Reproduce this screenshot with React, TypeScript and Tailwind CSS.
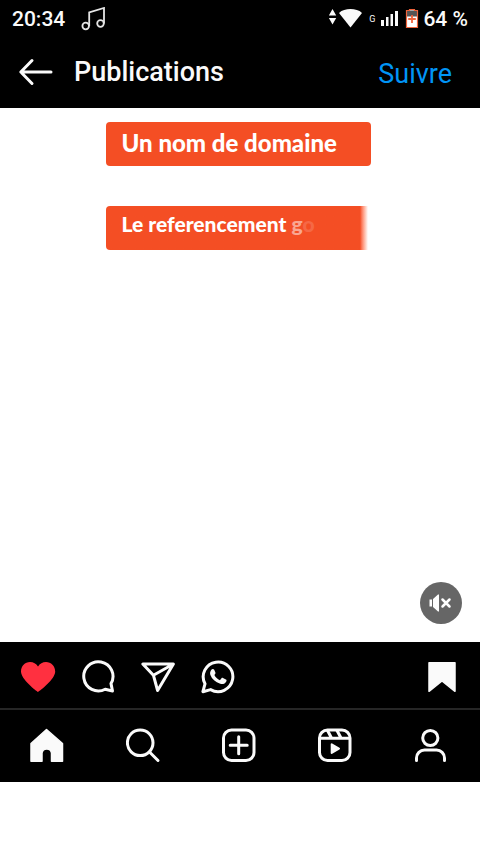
import React, { useState } from 'react';

interface IconButtonProps {
  label: string;
  onClick?: () => void;
  pressed?: boolean;
  children: React.ReactNode;
}

const IconButton: React.FC<IconButtonProps> = ({ label, onClick, pressed, children }) => (
  <button type="button" aria-label={label} aria-pressed={pressed} onClick={onClick} className="size-9 shrink-0">
    <svg
      viewBox="0 0 36 36"
      className="size-9"
      fill="none"
      stroke="currentColor"
      strokeWidth="3"
      strokeLinecap="round"
      strokeLinejoin="round"
    >
      {children}
    </svg>
  </button>
);

const StatusBar: React.FC = () => (
  <div className="flex h-[38px] items-center justify-between px-3 text-[21px] font-medium leading-9">
    <div className="flex items-center gap-4">
      <span>20:34</span>
      <svg viewBox="0 0 24 24" className="size-6" fill="none" stroke="#e5e5e5" strokeWidth="1.800">
        <circle cx="4.700" cy="19" r="3.300" />
        <circle cx="19.500" cy="16.500" r="3.300" />
        <path d="M8.200 19V5.500L23 1v15.500" />
      </svg>
    </div>
    <div className="flex items-center gap-1.5">
      <svg viewBox="0 0 34 20" className="h-5 w-[34px]" fill="currentColor">
        <path d="M3.500 0l3.700 6.500H-.2zM3.500 15.500L-.2 9h7.400z" />
        <path d="M21.500 18.500L10 4C13 1 17 0 21.500 0S30 1 33 4z" />
      </svg>
      <span className="text-[9px] font-normal leading-none">G</span>
      <svg viewBox="0 0 18 16" className="h-4 w-[18px]" fill="currentColor">
        <path d="M0 9h3v6H0zM5 6h2.500v9H5zM9.500 3H12v12H9.500zM14 0h3v15h-3z" />
      </svg>
      <div className="flex items-center gap-1">
        <svg viewBox="0 0 14 20" className="h-5 w-3.5">
          <path d="M1.500 1.500h3V.5h5v1h3v17h-11z" fill="#fff" />
          <path d="M1.500 1.500h11v6h-11z" fill="#555" />
          <path d="M1.500 1.500h3V.5h5v1h3v17h-11z" fill="none" stroke="#f0643c" strokeWidth="1.200" />
          <path d="M7 6v8M3.200 10h7.600" stroke="#f0643c" strokeWidth="1.800" />
        </svg>
        <span>64 %</span>
      </div>
    </div>
  </div>
);

const Header: React.FC = () => {
  const [following, setFollowing] = useState(false);

  return (
    <header className="flex h-[70px] items-center pb-0.5 pl-[18px] pr-7 text-[27px] leading-8">
      <IconButton label="Retour">
        <path d="M33 18H3M14 6.500L2.800 18 14 29.500" />
      </IconButton>
      <h1 className="ml-5 grow font-medium">Publications</h1>
      <button
        type="button"
        onClick={() => setFollowing(!following)}
        className="self-end py-4 text-[#0095f6]"
      >
        {following ? 'Suivi(e)' : 'Suivre'}
      </button>
    </header>
  );
};

const Media: React.FC = () => {
  const [muted, setMuted] = useState(true);

  return (
    <section className="relative aspect-[80/89] bg-white pl-[22%] pt-3.5 font-['Lato',sans-serif] font-black text-white">
      <p className="h-11 w-[71%] rounded bg-[#f44e24] pl-4 text-[24px] leading-[42px] whitespace-nowrap">
        Un nom de domaine
      </p>
      {/* second line is still being revealed */}
      <p className="mt-10 h-11 w-[70%] rounded-l bg-linear-to-r from-[#f44e24] from-97% to-white pl-4 text-[21px] leading-9 whitespace-nowrap">
        Le referencement <span className="opacity-50">g</span>
        <span className="opacity-15">o</span>
      </p>
      <button
        type="button"
        aria-label="Son"
        aria-pressed={muted}
        onClick={() => setMuted(!muted)}
        className="absolute bottom-[18px] right-[18px] size-[42px] rounded-full bg-[#666]"
      >
        <svg viewBox="0 0 42 42" className="size-[42px]" fill="#fff">
          <path d="M9.500 17.500h2.500v7H9.500zM13 17l5-4.500h1v17h-1l-5-4.500z" />
          {muted && (
            <path d="M22.500 17.500l7 7M29.500 17.500l-7 7" stroke="#fff" strokeWidth="2.500" strokeLinecap="round" />
          )}
        </svg>
      </button>
    </section>
  );
};

const Actions: React.FC = () => {
  const [liked, setLiked] = useState(true);
  const [saved, setSaved] = useState(true);

  return (
    <div className="flex gap-6 px-5 pb-3.5 pt-4">
      <IconButton label="J’aime" pressed={liked} onClick={() => setLiked(!liked)}>
        <path
          d="M18 34C16.500 33.200 1 21.500 1 13.600 1 8 5 4 10 4c3.400 0 6.200 1.600 8 4.400C19.800 5.600 22.600 4 26 4c5 0 9.200 4 9.200 9.600C35.200 21.500 19.500 33.200 18 34z"
          fill={liked ? '#ff3040' : 'none'}
          stroke={liked ? 'none' : 'currentColor'}
        />
      </IconButton>
      <IconButton label="Commenter">
        <path d="M31 25.600A14.600 14.600 0 1 0 25.200 31.200L32.500 33z" />
      </IconButton>
      <IconButton label="Partager">
        <path d="M2.800 6H33.400L17.600 32.500 13.400 17.200zM13.400 17.200L33 6.200" />
      </IconButton>
      <IconButton label="WhatsApp">
        <path d="M2.900 33.700L5 25.800A14.800 14.800 0 1 1 10.600 31.600z" />
        <path
          d="M11 12.200c1-1.600 2.600-1.600 3.200-.4l1.200 2.800c.3.800-.2 1.500-1 2.400 1.200 2.400 3 4.100 5.500 5.200l1.600-1.900c.4-.5.9-.6 1.500-.3l2.900 1.500c.8.400.8 1 .4 2-1 2.200-3.700 3-6 2.300-5-1.500-8.300-4.700-9.900-8.800-.6-1.700-.3-3.300.6-4.800z"
          fill="currentColor"
          stroke="none"
        />
      </IconButton>
      <div className="ml-auto flex">
        <IconButton label="Enregistrer" pressed={saved} onClick={() => setSaved(!saved)}>
          <path
            d="M5 4.700H31V33.300L18 22.800 5 33.300z"
            fill={saved ? 'currentColor' : 'none'}
            strokeWidth="1.500"
          />
        </IconButton>
      </div>
    </div>
  );
};

const NavBar: React.FC = () => (
  <nav className="grid h-[74px] grid-cols-5 place-items-center border-t-2 border-[#262626]">
    <IconButton label="Accueil">
      <path
        d="M1 15.500L16.500 1.500 32.500 15.500V33.300H21.500V25a4.800 4.800 0 0 0-9.500 0V33.300H1z"
        fill="currentColor"
        strokeWidth="1.500"
      />
    </IconButton>
    <IconButton label="Rechercher">
      <circle cx="14.200" cy="14.800" r="12.800" />
      <path d="M23.500 24L32 32.500" />
    </IconButton>
    <IconButton label="Créer">
      <rect x="1.500" y="2" width="30.500" height="30.500" rx="8" />
      <path d="M16.700 8.800v17M8.200 17.300h17" />
    </IconButton>
    <IconButton label="Reels">
      <rect x="1.500" y="2" width="30.500" height="30.500" rx="8" />
      <path d="M2 10.300h29.500M9.500 2.500l4 7.500M19 2.500l4 7.500" />
      <path d="M13.700 16.300v8.600l7.300-4.300z" fill="currentColor" strokeWidth="2" />
    </IconButton>
    <IconButton label="Profil">
      <circle cx="16.300" cy="10" r="7.600" />
      <path d="M2.500 32.500V30a8 8 0 0 1 8-8h12a8 8 0 0 1 8 8v2.500" />
    </IconButton>
  </nav>
);

const App: React.FC = () => {
  return (
    <main className="min-h-screen bg-white font-['Roboto',sans-serif] text-[#fafafa]">
      <div className="bg-black">
        <StatusBar />
        <Header />
        <Media />
        <Actions />
        <NavBar />
      </div>
    </main>
  );
};

export default App;
